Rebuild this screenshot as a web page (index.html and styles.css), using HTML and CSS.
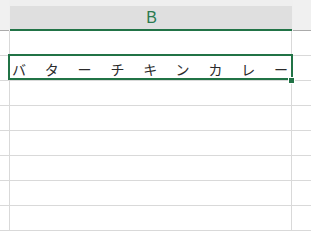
FILE: index.html
```html
<!DOCTYPE html>
<html lang="ja">
<head>
<meta charset="utf-8">
<link rel="stylesheet" href="styles.css">
</head>
<body>
<div class="sheet">
  <div class="hdr">
    <div class="hc side"></div>
    <div class="hc col-b"><span class="hlabel">B</span></div>
    <div class="hc side"></div>
  </div>
  <div class="row"><div class="c a"></div><div class="c b"></div><div class="c rest"></div></div>
  <div class="row"><div class="c a"></div><div class="c b"><span class="val">バターチキンカレー</span></div><div class="c rest"></div></div>
  <div class="row"><div class="c a"></div><div class="c b"></div><div class="c rest"></div></div>
  <div class="row"><div class="c a"></div><div class="c b"></div><div class="c rest"></div></div>
  <div class="row"><div class="c a"></div><div class="c b"></div><div class="c rest"></div></div>
  <div class="row"><div class="c a"></div><div class="c b"></div><div class="c rest"></div></div>
  <div class="row"><div class="c a"></div><div class="c b"></div><div class="c rest"></div></div>
  <div class="row"><div class="c a"></div><div class="c b"></div><div class="c rest"></div></div>
  <div class="selection"></div>
  <div class="handle"></div>
</div>
</body>
</html>
```
FILE: styles.css
```css
html, body {
  margin: 0;
  padding: 0;
  background: #ffffff;
}
.sheet {
  position: relative;
  width: 311px;
  height: 232px;
  overflow: hidden;
  font-family: "Liberation Sans", Arial, sans-serif;
}
.hdr {
  display: grid;
  grid-template-columns: 9px 282px 1fr;
  column-gap: 1px;
  height: 31px;
  background: #efefef;
}
.hc {
  box-sizing: border-box;
  height: 31px;
}
.side {
  background: #f0f0f0;
  border-bottom: 1px solid #ababab;
  height: 31px;
}
.col-b {
  margin-top: 6px;
  height: 25px;
  background: #dfdfdf;
  border-bottom: 2px solid #217346;
  display: flex;
  align-items: center;
  justify-content: center;
}
.hlabel {
  font-size: 16px;
  color: #2a7a4f;
  line-height: 1;
  margin-left: 1px;
  margin-top: 1px;
}
.row {
  display: grid;
  grid-template-columns: 10px 282px 1fr;
  height: 25px;
}
.c {
  box-sizing: border-box;
  border-bottom: 1px solid #d9d9d9;
  height: 25px;
}
.a, .b {
  border-right: 1px solid #d9d9d9;
}
.b {
  display: flex;
  align-items: center;
  padding-left: 2px;
  padding-top: 1px;
}
.val {
  font-family: "Noto Sans CJK JP", sans-serif;
  font-size: 14px;
  letter-spacing: 18.8px;
  color: #2b2b2b;
  white-space: nowrap;
  line-height: 1;
}
.selection {
  position: absolute;
  left: 8px;
  top: 54px;
  width: 285px;
  height: 26px;
  box-sizing: border-box;
  border: 2px solid #217346;
}
.handle {
  position: absolute;
  left: 288px;
  top: 77px;
  width: 7px;
  height: 7px;
  box-sizing: border-box;
  background: #217346;
  border: 1px solid #ffffff;
}
```
